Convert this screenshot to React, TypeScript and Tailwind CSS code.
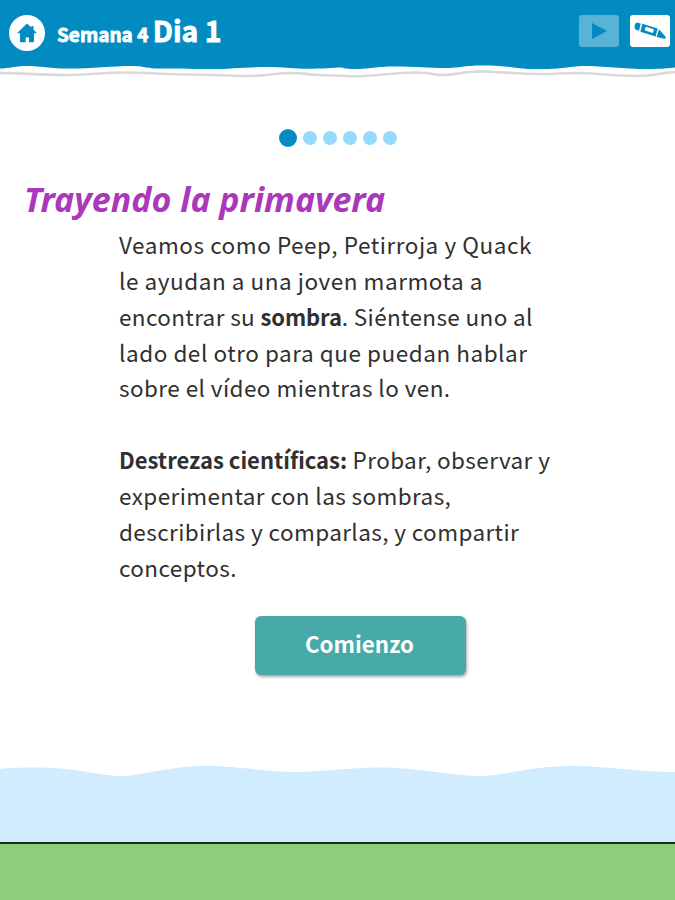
const DOTS = 6;

function HomeIcon() {
  return (
    <svg viewBox="0 0 20 20" className="w-5 h-5" fill="#028bc1">
      <path d="M10 0.6 L14.4 4.6 V3 H16.4 V6.5 L20 10.2 H17 V18.4 Q17 19.2 16.2 19.2 H12 V14.6 H8.6 V19.2 H3.8 Q3 19.2 3 18.4 V10.2 H0 Z" />
    </svg>
  );
}

function CrayonIcon() {
  return (
    <svg viewBox="0 0 32 18" className="w-8 h-[18px]" fill="#028bc1">
      <path d="M2.2 0.4 L6.8 1.4 L5 8.8 L1 7.2 Q-0.2 3.4 2.2 0.4 Z" />
      <path d="M8.4 1.8 L23.6 6.6 L21.6 14.6 L6.4 9.8 Z" />
      <path d="M12.2 4.8 L19.6 7.2 Q20.4 9.4 18.8 11 L11 8.6 Q10 6.6 12.2 4.8 Z" fill="#fff" />
      <path d="M25 7.2 L31.8 15 Q32 17 30.2 16.8 L22.6 15 Z" />
    </svg>
  );
}

function Header() {
  return (
    <header className="relative h-[80px] shrink-0">
      <svg viewBox="0 0 675 80" className="absolute inset-0 w-full h-full" preserveAspectRatio="none">
        <path
          d="M0 73 C20 73 40 75 65 75 S100 72.5 125 72.5 S165 74.5 190 74.5 S225 76 247 76 S275 73 290 73 S310 75 320 75 S340 76.3 357 76.3 S395 72.5 415 72.5 S430 75 442 75 S465 71.5 480 71.5 S520 74 540 74 S560 73 578 73 S610 76 635 76 S655 73 675 72"
          fill="none"
          stroke="#d9d9d9"
          strokeWidth="2.6"
        />
        <path
          d="M0 0 H675 V67.5 C665 69 650 69 640 69 S600 66 585 66 S565 69 545 69 S525 69 518 68 S500 65.5 482 65.5 S460 68 445 68 S415 66.5 395 66.5 S370 69 355 69 S345 67.5 340 67.5 S320 68.8 308 68.8 S285 67 265 67 S230 69 210 69 S170 68.5 158 68.5 S145 66 130 66 S90 68.6 70 68.6 S40 66 27 66 S10 68.5 0 68.5 Z"
          fill="#028bc1"
        />
      </svg>
      <div className="relative flex h-[66px] items-center pl-[9px] pr-[5px]">
        <button className="flex h-9 w-9 items-center justify-center rounded-full bg-white">
          <HomeIcon />
        </button>
        <h1 className="ml-3 pb-[6px] font-bold text-white leading-none whitespace-nowrap [-webkit-text-stroke:0.8px_white]">
          <span className="text-[19px]">Semana 4 </span>
          <span className="text-[28.3px]">Dia 1</span>
        </h1>
        <div className="ml-auto flex gap-[11px] pb-[5px]">
          <button className="flex h-8 w-10 items-center justify-center rounded-[3px] bg-[#58b3d7]">
            <svg viewBox="0 0 15 16" className="w-[15px] h-4">
              <path d="M0 0 L15 8 L0 16 Z" fill="#028bc1" />
            </svg>
          </button>
          <button className="flex h-8 w-10 items-center justify-center rounded-[3px] bg-white">
            <CrayonIcon />
          </button>
        </div>
      </div>
    </header>
  );
}

function Pager() {
  return (
    <div className="mt-12 ml-[279px] flex h-[19px] items-center gap-[6px]">
      {Array.from({ length: DOTS }, (_, i) => (
        <span
          key={i}
          className={i === 0 ? 'h-[18px] w-[18px] rounded-full bg-[#028bc1]' : 'h-[14px] w-[14px] rounded-full bg-[#96dafe]'}
        />
      ))}
    </div>
  );
}

function Scenery() {
  return (
    <svg viewBox="0 0 675 140" className="mt-auto w-full h-[140px] shrink-0" preserveAspectRatio="none">
      <path
        d="M0 9 C20 7 45 7 65 9 S100 15 118 16 S170 6 205 6 S265 12 295 12 S350 7 385 7.5 S455 16 480 16 S530 6 570 6 S635 12 675 12 V140 H0 Z"
        fill="#d1ebff"
      />
      <rect y="83" width="675" height="57" fill="#8dce7b" />
      <rect y="82" width="675" height="2" fill="#1c2b1c" />
    </svg>
  );
}

export default function App() {
  return (
    <div className="flex h-[900px] w-[675px] flex-col overflow-hidden bg-white font-['Noto_Sans_CJK_JP',sans-serif]">
      <Header />
      <Pager />
      <h2 className="mt-[29px] ml-[24px] h-[46px] font-['Noto_Sans',sans-serif] text-[34px] leading-[46px] font-bold italic whitespace-nowrap text-[#ab38bb]">
        Trayendo la primavera
      </h2>
      <div className="mt-[5px] ml-[119px] text-[22.5px] leading-[35.85px] whitespace-nowrap text-[#303030]">
        <p className="tracking-[0.54px]">
          Veamos como Peep, Petirroja y Quack<br />
          le ayudan a una joven marmota a<br />
          <span className="tracking-[0.36px]">
            encontrar su <strong className="text-[22px] tracking-[-0.1px]">sombra</strong>. Siéntense uno al
          </span>
          <br />
          lado del otro para que puedan hablar<br />
          <span className="tracking-[0.43px]">sobre el vídeo mientras lo ven.</span>
        </p>
        <p className="mt-9 tracking-[0.4px]">
          <strong className="text-[22px] tracking-normal">Destrezas científicas:</strong> Probar, observar y<br />
          experimentar con las sombras,<br />
          describirlas y comparlas, y compartir<br />
          conceptos.
        </p>
      </div>
      <button className="mt-[30px] ml-[255px] h-[59px] w-[211px] shrink-0 rounded-md bg-[#48a9a9] pr-[2px] pb-[3px] text-[22.3px] font-bold text-white shadow-[1px_2px_3px_rgba(0,0,0,0.35)]">
        Comienzo
      </button>
      <Scenery />
    </div>
  );
}
